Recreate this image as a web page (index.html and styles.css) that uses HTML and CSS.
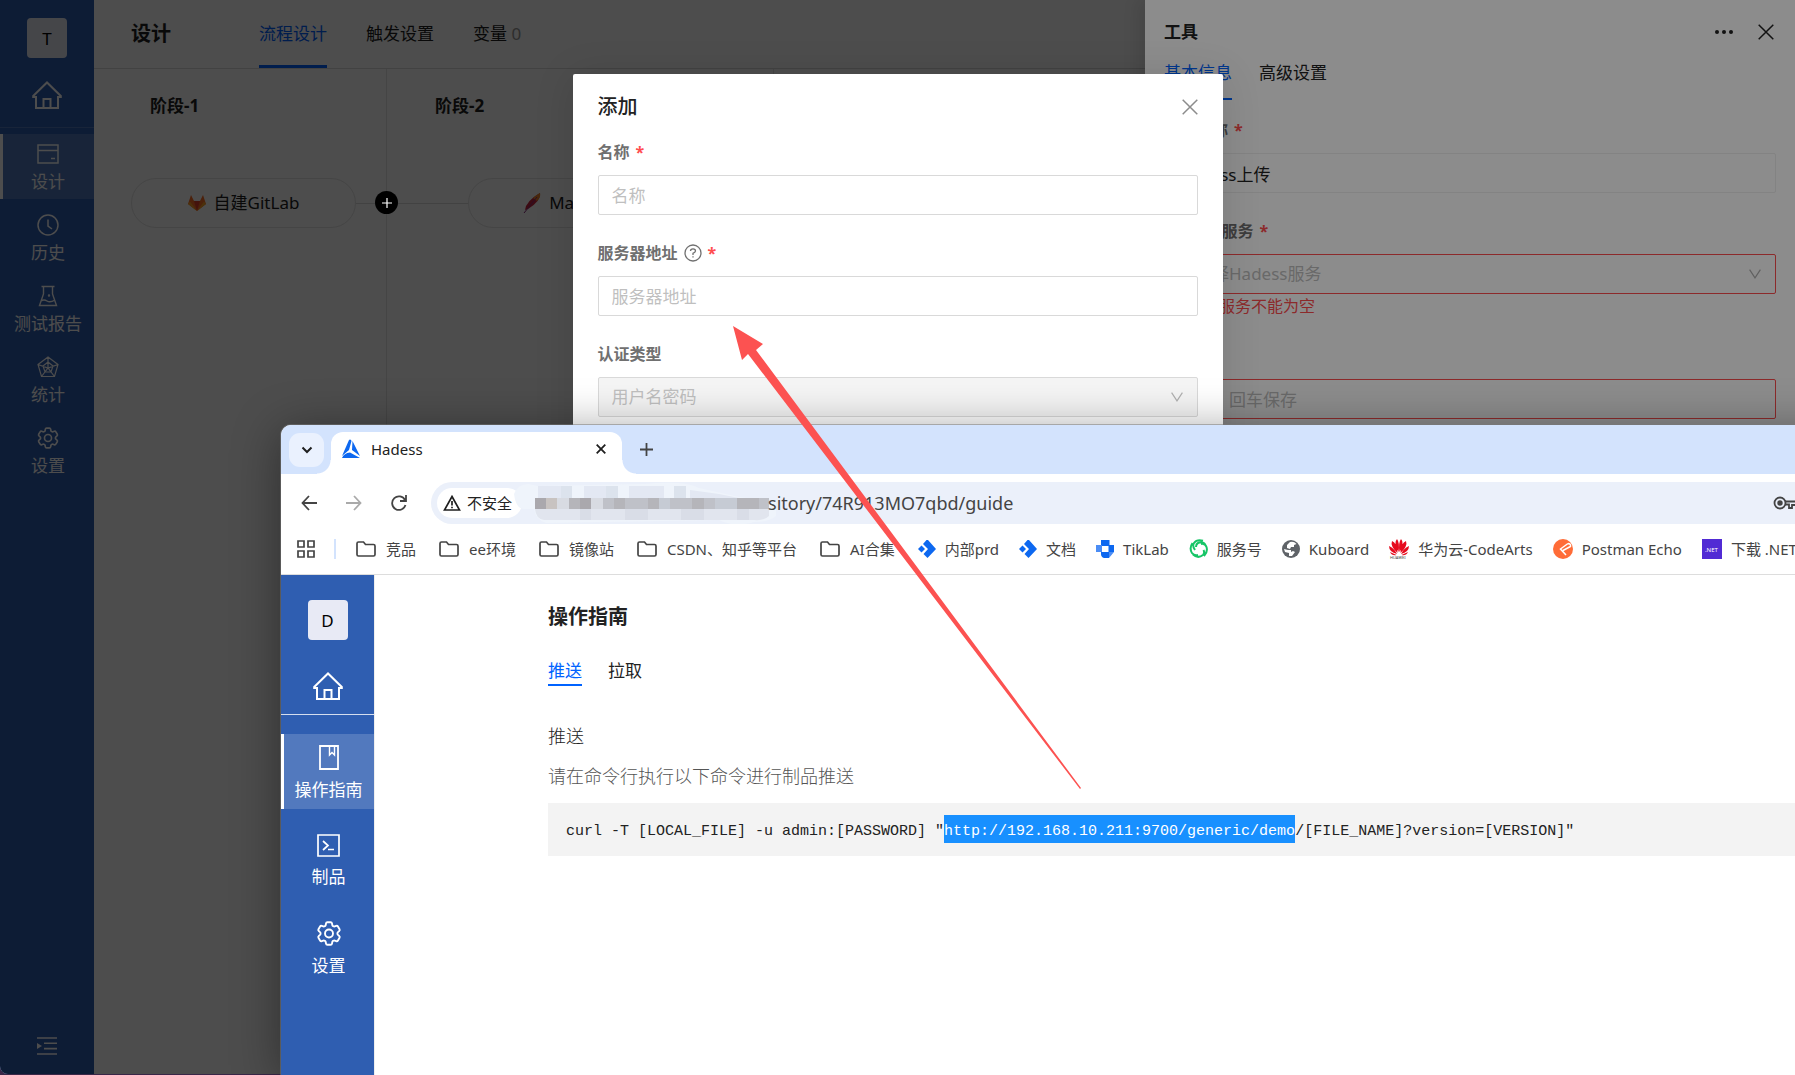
FILE: index.html
```html
<!DOCTYPE html>
<html lang="zh-CN">
<head>
    <meta charset="utf-8">
    <title>流程设计</title>
    <link rel="stylesheet" href="styles.css">
</head>
<body>
    <!-- shared icons -->
    <svg class="sprite" aria-hidden="true">
        <symbol id="home" viewBox="0 0 30 28">
            <path d="M4 27V16H1.200L1.200 15 15 1.500 28.800 15V16H26V27ZM11.500 27V18H18.500V27" fill="none" stroke="currentColor" stroke-width="2"/>
        </symbol>
        <symbol id="gear" viewBox="2 2 20 20">
            <path fill="none" stroke="currentColor" stroke-width="1.500" d="M9.594 3.940c.090-.542.560-.940 1.110-.940h2.593c.550 0 1.020.398 1.110.940l.213 1.281c.063.374.313.686.645.870.074.040.147.083.220.127.325.196.720.257 1.075.124l1.217-.456a1.125 1.125 0 0 1 1.370.490l1.296 2.247a1.125 1.125 0 0 1-.260 1.431l-1.003.827c-.293.241-.438.613-.430.992a7.723 7.723 0 0 1 0 .255c-.008.378.137.750.430.991l1.004.827c.424.350.534.955.260 1.430l-1.298 2.247a1.125 1.125 0 0 1-1.369.491l-1.217-.456c-.355-.133-.750-.072-1.076.124a6.470 6.470 0 0 1-.220.128c-.331.183-.581.495-.644.869l-.213 1.281c-.090.543-.560.940-1.110.940h-2.594c-.550 0-1.019-.398-1.110-.940l-.213-1.281c-.062-.374-.312-.686-.644-.870a6.520 6.520 0 0 1-.220-.127c-.325-.196-.720-.257-1.076-.124l-1.217.456a1.125 1.125 0 0 1-1.369-.490l-1.297-2.247a1.125 1.125 0 0 1 .260-1.431l1.004-.827c.292-.240.437-.613.430-.991a6.932 6.932 0 0 1 0-.255c.007-.380-.138-.751-.430-.992l-1.004-.827a1.125 1.125 0 0 1-.260-1.430l1.297-2.247a1.125 1.125 0 0 1 1.370-.491l1.216.456c.356.133.751.072 1.076-.124.072-.044.146-.086.220-.128.332-.183.582-.495.644-.869l.214-1.280Z"/>
            <circle cx="12" cy="12" r="3.200" fill="none" stroke="currentColor" stroke-width="1.500"/>
        </symbol>
        <symbol id="close" viewBox="0 0 16 16">
            <path d="M.7.7 15.300 15.300M15.300.7.7 15.300" stroke="currentColor" stroke-width="1.500"/>
        </symbol>
        <symbol id="chevron" viewBox="0 0 12 10">
            <path d="M.6.6 6 8.800 11.400.6" fill="none" stroke="currentColor" stroke-width="1.200"/>
        </symbol>
        <symbol id="folder" viewBox="0 0 20 16">
            <path d="M1 13.500V2.500Q1 1 2.500 1H7.500L9.500 3.500H17.500Q19 3.500 19 5V13.500Q19 15 17.500 15H2.500Q1 15 1 13.500Z" fill="none" stroke="currentColor" stroke-width="1.700"/>
        </symbol>
        <symbol id="thoughtware" viewBox="0 0 18 18">
            <path d="M8.500 0H10L18 9 9.500 18 5.500 14 10 9 5 4Z" fill="#0d68f0"/>
            <path d="M3.500 5.500 7 9 3.500 12.500 0 9Z" fill="#0d68f0"/>
        </symbol>
    </svg>

    <div class="app">
        <nav class="sidebar">
            <div class="sidebar__avatar">T</div>
            <a class="sidebar__home" href="#"><svg width="30" height="28"><use href="#home"/></svg></a>
            <ul class="menu">
                <li><a class="menu__item menu__item--active" href="#">
                    <svg width="22" height="22" viewBox="0 0 22 22" fill="none" stroke="currentColor" stroke-width="1.500"><path d="M1 2H21V20H1ZM1 7.500H21M14 15.500H18"/></svg>
                    设计</a></li>
                <li><a class="menu__item" href="#">
                    <svg width="22" height="22" viewBox="0 0 22 22" fill="none" stroke="currentColor" stroke-width="1.500"><circle cx="11" cy="11" r="10"/><path d="M11 5.500V12L15 15"/></svg>
                    历史</a></li>
                <li><a class="menu__item" href="#">
                    <svg width="22" height="22" viewBox="0 0 22 22" fill="none" stroke="currentColor" stroke-width="1.400"><path d="M4.500 1.500H17.500M6.500 1.500V9L2.500 20.500H19.500L15.500 9V1.500M4 16Q7 14 10 16T18 15"/><circle cx="12" cy="10.500" r=".5"/></svg>
                    测试报告</a></li>
                <li><a class="menu__item" href="#">
                    <svg width="22" height="22" viewBox="0 0 22 22" fill="none" stroke="currentColor" stroke-width="1.200"><path d="M11 1 21 8.500 17.500 20.500H4.500L1 8.500ZM11 6 16 10 14 16H8L6 10ZM11 1V12M21 8.500 11 12 1 8.500M17.500 20.500 11 12 4.500 20.500"/></svg>
                    统计</a></li>
                <li><a class="menu__item" href="#">
                    <svg width="24" height="22"><use href="#gear"/></svg>
                    设置</a></li>
            </ul>
            <button class="sidebar__fold" aria-label="展开">
                <svg width="20" height="18" viewBox="0 0 20 18"><path d="M0 1H20M7 6.300H20M7 11.600H20M0 17H20" stroke="currentColor" stroke-width="1.600"/><path d="M0 6 5 9 0 12Z" fill="currentColor"/></svg>
            </button>
        </nav>

        <main class="design">
            <header class="design__head">
                <h1 class="design__title">设计</h1>
                <a class="design__tab design__tab--active" href="#">流程设计</a>
                <a class="design__tab" href="#">触发设置</a>
                <a class="design__tab" href="#">变量 <span class="design__count">0</span></a>
            </header>
            <div class="stages">
                <section class="stage stage--first">
                    <h2 class="stage__name">阶段-1</h2>
                    <div class="stage__row">
                        <div class="task">
                            <svg width="18" height="18" viewBox="0 0 18 18"><path d="M9 17 0 10 3 1 6 7H12L15 1 18 10Z" fill="#fc6d26"/><path d="M9 17 6 7H12Z" fill="#e24329"/><path d="M9 17 0 10 2 7.500 9 17 16 7.500 18 10Z" fill="#fca326"/></svg>
                            自建GitLab
                        </div>
                    </div>
                    <button class="stage__add" aria-label="添加阶段">
                        <svg width="12" height="12" viewBox="0 0 12 12"><path d="M6 1V11M1 6H11" stroke="#fff" stroke-width="1.200"/></svg>
                    </button>
                </section>
                <section class="stage">
                    <h2 class="stage__name">阶段-2</h2>
                    <div class="stage__row">
                        <div class="task">
                            <svg width="18" height="20" viewBox="0 0 18 20"><path d="M17 0Q18 8 5 16L2 17Q3 8 17 0Z" fill="#c9243f"/><path d="M17 0Q18 4 14 8L10 5Q13 2 17 0Z" fill="#f0872a"/><path d="M14 4 1 20" stroke="#8a2a7c"/></svg>
                            Maven构建
                        </div>
                    </div>
                </section>
                <section class="stage"></section>
            </div>
        </main>

        <div class="mask"></div>

        <aside class="drawer">
            <header class="drawer__head">
                <h2 class="drawer__title">工具</h2>
                <button class="icon-button" aria-label="更多">
                    <svg width="20" height="6" viewBox="0 0 20 6" fill="currentColor"><circle cx="3" cy="3" r="2"/><circle cx="10" cy="3" r="2"/><circle cx="17" cy="3" r="2"/></svg>
                </button>
                <button class="icon-button" aria-label="关闭"><svg width="16" height="16"><use href="#close"/></svg></button>
            </header>
            <div class="drawer__tabs">
                <a class="drawer__tab drawer__tab--active" href="#">基本信息</a>
                <a class="drawer__tab" href="#">高级设置</a>
            </div>
            <div class="field field--pale">
                <label class="field__label" for="taskName">任务名称 <span class="required">*</span></label>
                <input class="field__control" id="taskName" type="text" value="Hadess上传">
            </div>
            <div class="field field--error">
                <label class="field__label" for="service">Hadess服务 <span class="required">*</span></label>
                <div class="field__select">
                    <select class="field__control" id="service"><option>请选择Hadess服务</option></select>
                    <svg class="field__arrow" width="12" height="10"><use href="#chevron"/></svg>
                </div>
                <p class="field__error">Hadess服务不能为空</p>
            </div>
            <div class="field field--error">
                <label class="field__label" for="artifact">制品</label>
                <input class="field__control" id="artifact" type="text" placeholder="名称，回车保存">
            </div>
        </aside>

        <div class="mask"></div>

        <form class="modal">
            <header class="modal__head">
                <h2 class="modal__title">添加</h2>
                <button class="icon-button icon-button--grey" type="button" aria-label="关闭"><svg width="16" height="16"><use href="#close"/></svg></button>
            </header>
            <div class="field">
                <label class="field__label" for="name">名称 <span class="required">*</span></label>
                <input class="field__control" id="name" type="text" placeholder="名称">
            </div>
            <div class="field">
                <label class="field__label" for="address">服务器地址
                    <svg width="18" height="18" viewBox="0 0 18 18" fill="none" stroke="currentColor" stroke-width="1.300"><circle cx="9" cy="9" r="8"/><path d="M6.500 7Q6.500 4.800 9 4.800T11.500 7Q11.500 8.300 9 9.300V11M9 12.200V13.600"/></svg>
                    <span class="required">*</span></label>
                <input class="field__control" id="address" type="text" placeholder="服务器地址">
            </div>
            <div class="field">
                <label class="field__label" for="auth">认证类型</label>
                <div class="field__select">
                    <select class="field__control" id="auth" disabled><option>用户名密码</option></select>
                    <svg class="field__arrow" width="12" height="10"><use href="#chevron"/></svg>
                </div>
            </div>
        </form>
    </div>

    <div class="browser">
        <div class="tabs">
            <button class="tabs__search" aria-label="搜索标签页">
                <svg width="12" height="8" viewBox="0 0 12 8"><path d="M1.500 1.500 6 6 10.500 1.500" fill="none" stroke="#1f1f1f" stroke-width="2"/></svg>
            </button>
            <div class="tab">
                <svg width="20" height="20" viewBox="0 0 20 20"><path d="M8 1Q9 0 10 1L10.500 2 8 11 1 17ZM11.500 2 19 17 11 11ZM1 19Q3 14 9 13.500L19 19Z" fill="#0d68f0"/></svg>
                <span class="tab__title">Hadess</span>
                <button class="tab__close" aria-label="关闭标签页"><svg width="10" height="10" viewBox="0 0 10 10"><path d="M.7.7 9.300 9.300M9.300.7.7 9.300" stroke="#1f1f1f" stroke-width="1.800"/></svg></button>
            </div>
            <button class="tabs__new" aria-label="新标签页"><svg width="13" height="13" viewBox="0 0 13 13"><path d="M6.500 0V13M0 6.500H13" stroke="#444" stroke-width="1.800"/></svg></button>
        </div>

        <div class="toolbar">
            <button class="toolbar__button" aria-label="后退"><svg width="16" height="16" viewBox="0 0 16 16" fill="none" stroke="#444" stroke-width="1.800"><path d="M16 8H1.500M8 1 1.500 8 8 15"/></svg></button>
            <button class="toolbar__button" aria-label="前进"><svg width="16" height="16" viewBox="0 0 16 16" fill="none" stroke="#aaa" stroke-width="1.800"><path d="M0 8H14.500M8 1 14.500 8 8 15"/></svg></button>
            <button class="toolbar__button" aria-label="刷新"><svg width="16" height="16" viewBox="0 0 16 16" fill="none" stroke="#444" stroke-width="1.800"><path d="M14.500 10A6.800 6.800 0 1 1 14 5M15 0V6H9"/></svg></button>
            <div class="omnibox">
                <button class="omnibox__chip">
                    <svg width="18" height="16" viewBox="0 0 18 16" fill="none" stroke="#1f1f1f" stroke-width="1.700"><path d="M9 1.500 16.500 15H1.500ZM9 6V10.500M9 11.700V13.300"/></svg>
                    不安全
                </button>
                <span class="omnibox__url">
                    <svg class="omnibox__mosaic" width="262" height="42" viewBox="0 0 262 42">
                        <path d="M0 12Q4 2 14 2L24 4 130 2Q170 -2 185 6L225 15 262 20V34Q255 40 240 40 220 46 205 38L32 41Q22 38 20 27H10Q2 27 0 12Z" fill="#eff4fb"/>
                        <path d="M24 4H47V16H24ZM70 4H92V16H70ZM115 4H150V16H115ZM176 8 205 12 225 16H176Z" fill="#e3e8f3"/>
                        <path d="M47 4H58V16H47ZM92 4H104V16H92ZM160 4H172V16H160Z" fill="#dce3ed"/>
                        <path d="M21 27H255V34Q250 39 240 38H30Q22 37 21 27Z" fill="#e1e5ee"/>
                        <path d="M66 27H77V38H66ZM111 27H134V38H111ZM167 27H190V38H167ZM223 27H235V38H223Z" fill="#d9dde7"/>
                        <path d="M21 16H255V27H21Z" fill="#bfc1c8"/>
                        <path d="M21 16H32V27H21ZM66 16H77V27H66Z" fill="#aaa8ad"/>
                        <path d="M32 16H43V27H32Z" fill="#c8c3c1"/>
                        <path d="M43 16H55V27H43ZM77 16H89V27H77Z" fill="#d8dbe2"/>
                        <path d="M55 16H66V27H55ZM100 16H111V27H100ZM134 16H145V27H134ZM178 16H190V27H178ZM223 16H245V27H223Z" fill="#b5b5ba"/>
                        <path d="M145 16H156V27H145ZM201 16H223V27H201Z" fill="#c6cbd4"/>
                    </svg>sitory/74R913MO7qbd/guide</span>
                <button class="omnibox__key" aria-label="密码"><svg width="24" height="14" viewBox="0 0 24 14" fill="none" stroke="#444" stroke-width="1.800"><circle cx="7" cy="7" r="5.500"/><circle cx="7" cy="7" r="1.800" fill="#444"/><path d="M12 5.500H23M12 8.500H16V12H19V9H23"/></svg></button>
            </div>
        </div>

        <div class="bookmarks">
            <svg width="18" height="18" viewBox="0 0 18 18" fill="none" stroke="#444" stroke-width="1.700"><path d="M1 1H7V7H1ZM11 1H17V7H11ZM1 11H7V17H1ZM11 11H17V17H11Z"/></svg>
            <i class="bookmarks__line"></i>
            <a class="bookmark bookmark--folder" href="#"><svg width="20" height="16"><use href="#folder"/></svg>竞品</a>
            <a class="bookmark bookmark--folder" href="#"><svg width="20" height="16"><use href="#folder"/></svg>ee环境</a>
            <a class="bookmark bookmark--folder" href="#"><svg width="20" height="16"><use href="#folder"/></svg>镜像站</a>
            <a class="bookmark bookmark--folder" href="#"><svg width="20" height="16"><use href="#folder"/></svg>CSDN、知乎等平台</a>
            <a class="bookmark bookmark--folder" href="#"><svg width="20" height="16"><use href="#folder"/></svg>AI合集</a>
            <a class="bookmark" href="#"><svg width="18" height="18"><use href="#thoughtware"/></svg>内部prd</a>
            <a class="bookmark" href="#"><svg width="18" height="18"><use href="#thoughtware"/></svg>文档</a>
            <a class="bookmark" href="#"><svg width="18" height="18" viewBox="0 0 18 18"><path d="M5 0H13.500V5H18V12H12.500V6H5ZM5 12H13V18H8Q5 17 5 14Z" fill="#0d68f0"/><path d="M0 5H6V12H0ZM13 12 18 12 13 18Z" fill="#4b8df5"/></svg>TikLab</a>
            <a class="bookmark" href="#"><svg width="19" height="19" viewBox="0 0 19 19" fill="none" stroke="#16c566" stroke-width="2"><path d="M14 1.800Q8 0 5 4 3 7 6 11M3.500 4Q0 9 3 14 5 17 9 16M4 15.500Q9 20 14 16 16 14 14.500 11M15 17Q19 13 17.500 8 16 4 12 5M16.500 6Q14 2 9 4 7 5 7 8"/></svg>服务号</a>
            <a class="bookmark" href="#"><svg width="18" height="18" viewBox="0 0 18 18"><circle cx="9" cy="9" r="9" fill="#5f6368"/><path d="M8 2Q12 1 14.500 4L12 5V7H9L8 9 5 8V5ZM2 9 6 10 9 10V12L11 11 13 12 10 16 7 16V13L3 12Z" fill="#fff"/></svg>Kuboard</a>
            <a class="bookmark" href="#"><svg width="20" height="20" viewBox="0 0 20 20"><g fill="#e60a1e"><path d="M9.500 13Q4 4 8 0 11 4 9.500 13ZM10.500 13Q9 4 12 0 16 4 10.500 13ZM8.500 14Q1 7 3 2 8 4 8.500 14ZM11.500 14Q12 4 17 2 19 7 11.500 14ZM8 15Q0 13 0 7 5 9 8 15ZM12 15Q15 9 20 7 20 13 12 15ZM7.500 16Q3 17 1 13ZM12.500 16Q17 17 19 13Z"/></g><text x="1" y="20" font-size="4" fill="#444">HUAWEI</text></svg>华为云-CodeArts</a>
            <a class="bookmark" href="#"><svg width="20" height="20" viewBox="0 0 20 20"><circle cx="10" cy="10" r="10" fill="#ff6c37"/><path d="M15 4.500 7.500 10 13 16M15 4.500Q18 4.500 17.500 7.500L10 11.500" fill="none" stroke="#fff" stroke-width="1.500"/></svg>Postman Echo</a>
            <a class="bookmark" href="#"><svg width="20" height="20" viewBox="0 0 20 20"><path d="M0 0H20V20H0Z" fill="#512bd4"/><text x="3" y="13" font-size="6" fill="#fff">.NET</text></svg>下载 .NET</a>
        </div>

        <div class="hadess">
            <nav class="sidebar sidebar--hadess">
                <div class="sidebar__avatar">D</div>
                <a class="sidebar__home" href="#"><svg width="30" height="28"><use href="#home"/></svg></a>
                <ul class="menu">
                    <li><a class="menu__item menu__item--active" href="#">
                        <svg width="20" height="25" viewBox="0 0 20 25" fill="none" stroke="currentColor" stroke-width="1.800"><path d="M1 1H19V24H1Z"/><path d="M10.500 1V10L13 7.500 15.500 10V1" stroke-width="1.400"/></svg>
                        操作指南</a></li>
                    <li><a class="menu__item" href="#">
                        <svg width="23" height="23" viewBox="0 0 23 23" fill="none" stroke="currentColor" stroke-width="1.700"><path d="M1 1H22V22H1ZM6 7 11 11.500 6 16M11 15.500H17"/></svg>
                        制品</a></li>
                    <li><a class="menu__item" href="#">
                        <svg width="26" height="25"><use href="#gear"/></svg>
                        设置</a></li>
                </ul>
            </nav>
            <main class="guide">
                <h1 class="guide__title">操作指南</h1>
                <div class="guide__tabs">
                    <a class="guide__tab guide__tab--active" href="#">推送</a>
                    <a class="guide__tab" href="#">拉取</a>
                </div>
                <h2 class="guide__subtitle">推送</h2>
                <p class="guide__text">请在命令行执行以下命令进行制品推送</p>
                <pre class="guide__code">curl -T [LOCAL_FILE] -u admin:[PASSWORD] "<mark>http://192.168.10.211:9700/generic/demo</mark>/[FILE_NAME]?version=[VERSION]"</pre>
            </main>
        </div>
    </div>

    <!-- arrow from the command to the address field -->
    <svg class="arrow" width="348" height="463" viewBox="0 0 348 463"><path d="M0 0 30 18 23 24 348 462 347 463 15 28 9 34Z" fill="#fc5251"/></svg>
</body>
</html>
```
FILE: styles.css
```css
* {
    box-sizing: border-box;
}

body {
    margin: 0;
    height: 100vh;
    position: relative;
    overflow: hidden;
    background: #3a2748;
    color: #222;
    font-family: "Noto Sans", "Noto Sans CJK SC", sans-serif;
    font-size: 17px;
    line-height: 24px;
}

h1, h2, p, pre, ul {
    margin: 0;
    padding: 0;
    font-weight: normal;
}

ul {
    list-style: none;
}

a {
    color: inherit;
    text-decoration: none;
}

button {
    padding: 0;
    border: 0;
    background: none;
    color: inherit;
    font: inherit;
}

svg {
    flex: none;
    display: block;
}

.sprite {
    position: absolute;
    width: 0;
    height: 0;
}

.app {
    position: relative;
    display: grid;
    grid-template-columns: 94px 1fr;
    height: calc(100vh - 1px);
    overflow: hidden;
    background: #fff;
    border-radius: 0 0 0 8px;
}

.mask {
    position: absolute;
    inset: 0;
    background: rgba(0, 0, 0, .45);
}

/* sidebar */
.sidebar {
    display: flex;
    flex-direction: column;
    align-items: center;
    padding: 18px 0;
    background: #2f5eb1;
    color: #fff;
}

.sidebar__avatar {
    width: 40px;
    height: 40px;
    border-radius: 4px;
    background: #e8eaf5;
    color: #000;
    line-height: 42px;
    text-align: center;
}

.sidebar__home {
    margin: 23px 0 18px;
}

.sidebar__fold {
    margin-top: auto;
    padding: 0 0 1px;
}

.menu {
    display: flex;
    flex-direction: column;
    gap: 6px;
    width: 100%;
    padding-top: 6px;
    border-top: 1px solid #5379c0;
}

.menu__item {
    display: flex;
    flex-direction: column;
    align-items: center;
    justify-content: center;
    gap: 5px;
    height: 65px;
    padding: 3px 1px 0 0;
    border-left: 3px solid transparent;
}

.menu__item--active {
    border-color: #fff;
    background: rgba(255, 255, 255, .17);
}

.sidebar--hadess {
    padding-top: 25px;
}

.sidebar--hadess .sidebar__home {
    margin: 32px 0 14px;
}

.sidebar--hadess .menu {
    gap: 13px;
    padding-top: 19px;
    border-color: #d5deef;
}

.sidebar--hadess .menu__item {
    gap: 8px;
    height: 75px;
}

/* pipeline design */
.design {
    display: flex;
    flex-direction: column;
}

.design__head {
    display: flex;
    gap: 39px;
    height: 69px;
    padding-left: 37px;
    border-bottom: 1px solid #ddd;
    line-height: 68px;
}

.design__title {
    margin-right: 49px;
    font-size: 20px;
    font-weight: bold;
}

.design__tab--active {
    border-bottom: 3px solid #0063ff;
    color: #0063ff;
}

.design__count {
    color: #999;
}

.stages {
    flex: 1;
    display: grid;
    grid-template-columns: 293px 387px 1fr;
}

.stage {
    position: relative;
    padding-top: 25px;
    border-right: 1px solid #e6e6e6;
}

.stage__name {
    margin-left: 48px;
    font-size: 17px;
    font-weight: bold;
}

.stage--first .stage__name {
    margin-left: 56px;
}

.stage__row {
    display: flex;
    align-items: center;
    margin-top: 60px;
}

.stage__row::before,
.stage__row::after {
    content: "";
    flex: 1;
    border-top: 1px solid #ddd;
}

.stage--first .stage__row::before {
    flex: 0 0 37px;
    border: 0;
}

.task {
    display: flex;
    align-items: center;
    justify-content: center;
    gap: 8px;
    width: 225px;
    height: 50px;
    border: 1px solid #e6e6e6;
    border-radius: 25px;
}

.stage__add {
    position: absolute;
    top: 122px;
    right: -12px;
    z-index: 1;
    display: flex;
    align-items: center;
    justify-content: center;
    width: 23px;
    height: 23px;
    border-radius: 50%;
    background: #000;
}

/* drawer */
.drawer {
    position: absolute;
    top: 0;
    right: 0;
    bottom: 0;
    width: 650px;
    padding: 17px 19px 0 19px;
    background: #fff;
    box-shadow: -6px 0 16px rgba(0, 0, 0, .1);
}

.drawer__head {
    display: flex;
    align-items: center;
    gap: 24px;
    height: 30px;
    padding-right: 2px;
}

.drawer__title {
    flex: 1;
    font-size: 17px;
    font-weight: bold;
}

.icon-button--grey {
    color: #8c8c8c;
}

.drawer__tabs {
    display: flex;
    gap: 27px;
    margin: 14px 0 18px;
}

.drawer__tab {
    padding-bottom: 13px;
    border-bottom: 2px solid transparent;
}

.drawer__tab--active {
    border-color: #0063ff;
    color: #0063ff;
}

/* form fields */
.field {
    margin-bottom: 26px;
}

.field__label {
    display: flex;
    align-items: center;
    gap: 6px;
    height: 24px;
    margin-bottom: 11px;
    color: #707070;
    font-size: 16px;
    font-weight: bold;
}

.required {
    color: #ff4d4f;
}

.field__control {
    display: block;
    width: 100%;
    height: 40px;
    padding: 0 13px;
    border: 1px solid #d9d9d9;
    border-radius: 2px;
    background: #fff;
    color: #222;
    font: inherit;
    appearance: none;
}

.field__control::placeholder {
    color: #bfbfbf;
}

.field__select {
    position: relative;
}

select.field__control {
    color: #bfbfbf;
    opacity: 1;
}

select.field__control:disabled {
    background: #f5f5f5;
}

.field__arrow {
    position: absolute;
    top: 15px;
    right: 15px;
    color: #b0b0b0;
}

.field--pale .field__control {
    border-color: #eee;
}

.field--error .field__control {
    border-color: #ff4d4f;
}

.field__error {
    color: #ff4d4f;
    font-size: 16px;
}

/* modal */
.modal {
    position: absolute;
    top: 74px;
    left: calc(50% - 325px);
    width: 650px;
    height: 600px;
    padding: 20px 25px;
    background: #fff;
    border-radius: 2px;
    box-shadow: 0 3px 40px rgba(0, 0, 0, .12);
}

.modal__head {
    display: flex;
    align-items: center;
    justify-content: space-between;
    height: 26px;
    margin-bottom: 20px;
}

.modal__title {
    font-size: 20px;
    font-weight: 500;
}

/* browser window, runs off the right edge of the desktop */
.browser {
    position: absolute;
    top: 425px;
    left: 281px;
    right: -120px;
    bottom: 0;
    display: flex;
    flex-direction: column;
    overflow: hidden;
    border-radius: 10px 0 0 0;
    background: #fff;
    box-shadow: 0 0 0 1px rgba(120, 120, 120, .5), 0 6px 48px rgba(0, 0, 0, .4);
    font-size: 15px;
}

.tabs {
    display: flex;
    align-items: center;
    height: 49px;
    padding-left: 8px;
    background: #d3e3fd;
}

.tabs__search {
    display: flex;
    align-items: center;
    justify-content: center;
    width: 35px;
    height: 34px;
    border-radius: 11px;
    background: #eaf1fe;
}

.tab {
    position: relative;
    align-self: flex-end;
    display: flex;
    align-items: center;
    gap: 10px;
    width: 291px;
    height: 42px;
    margin: 0 18px 0 7px;
    padding: 0 16px 8px 10px;
    border-radius: 12px 12px 0 0;
    background: #fff;
}

.tab::before,
.tab::after {
    content: "";
    position: absolute;
    bottom: 0;
    width: 14px;
    height: 14px;
}

.tab::before {
    right: 100%;
    background: radial-gradient(circle at 0 0, transparent 13px, #fff 14px);
}

.tab::after {
    left: 100%;
    background: radial-gradient(circle at 100% 0, transparent 13px, #fff 14px);
}

.tab__title {
    flex: 1;
}

.toolbar {
    display: flex;
    align-items: center;
    height: 57px;
    padding: 0 40px 0 20px;
}

.toolbar__button {
    width: 16px;
    margin-right: 29px;
}

.toolbar__button:nth-child(3) {
    margin-right: 24px;
}

.omnibox {
    flex: 1;
    display: flex;
    align-items: center;
    height: 42px;
    padding: 0 78px 0 6px;
    border-radius: 21px;
    background: #ebf0fa;
}

.omnibox__chip {
    display: flex;
    align-items: center;
    gap: 6px;
    height: 30px;
    padding: 0 10px 0 6px;
    border-radius: 15px;
    background: #fff;
}

.omnibox__url {
    flex: 1;
    display: flex;
    align-items: center;
    margin-left: -8px;
    color: #444;
    font-size: 18px;
}

.omnibox__mosaic {
    margin-right: -8px;
}

.bookmarks {
    display: flex;
    align-items: center;
    height: 44px;
    padding: 0 0 8px 16px;
    border-bottom: 1px solid #ddd;
    color: #444;
    white-space: nowrap;
}

.bookmarks__line {
    width: 2px;
    height: 20px;
    margin: 0 20px 0 19px;
    background: #d3e3fd;
}

.bookmark {
    flex: none;
    display: flex;
    align-items: center;
    gap: 9px;
    margin-right: 20px;
}

.bookmark--folder {
    gap: 10px;
    margin-right: 23px;
}

.hadess {
    flex: 1;
    display: grid;
    grid-template-columns: 93px 1fr;
    font-size: 17px;
}

/* guide page */
.guide {
    padding: 30px 0 0 173px;
    border-left: 1px solid #eee;
}

.guide__title {
    font-size: 20px;
    font-weight: bold;
}

.guide__tabs {
    display: flex;
    gap: 26px;
    margin: 30px 0 38px;
}

.guide__tab {
    padding-bottom: 1px;
    border-bottom: 2px solid transparent;
}

.guide__tab--active {
    border-color: #0063ff;
    color: #0063ff;
}

.guide__subtitle,
.guide__text {
    font-size: 18px;
    font-weight: 300;
}

.guide__text {
    margin: 16px 0 15px;
    color: #555;
}

.guide__code {
    padding: 15px 18px 10px;
    background: #f3f3f3;
    font-family: "Liberation Mono", monospace;
    font-size: 15px;
    line-height: 28px;
}

.guide__code mark {
    padding: 8px 0 3px;
    background: #1890ff;
    color: #fff;
}

.arrow {
    position: absolute;
    top: 326px;
    left: 733px;
}
```
